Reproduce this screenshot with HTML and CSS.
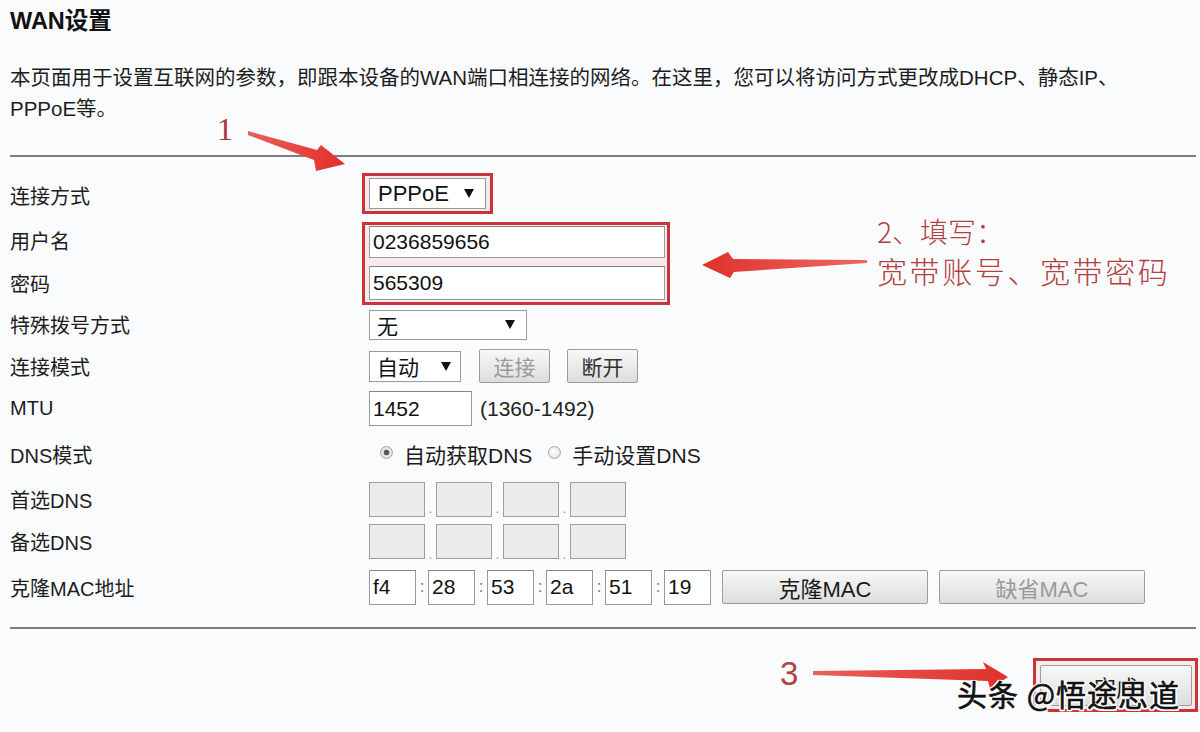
FILE: index.html
```html
<!DOCTYPE html>
<html lang="zh-CN">
<head>
<meta charset="utf-8">
<title>WAN设置</title>
<link rel="stylesheet" href="styles.css">
</head>
<body>
<div class="page">
  <h1 class="title">WAN设置</h1>
  <p class="intro">本页面用于设置互联网的参数，即跟本设备的WAN端口相连接的网络。在这里，您可以将访问方式更改成DHCP、静态IP、<br>PPPoE等。</p>
  <hr class="rule">

  <div class="form">
    <div class="label r1">连接方式</div>
    <div class="ctl r1">
      <div class="mark mark-type">
        <div class="select sel-type"><span>PPPoE</span><span class="caret"></span></div>
      </div>
    </div>

    <div class="label r2">用户名</div>
    <div class="label r3">密码</div>
    <div class="mark mark-cred">
      <input class="text" type="text" value="0236859656">
      <input class="text text-b" type="text" value="565309">
    </div>

    <div class="label r4">特殊拨号方式</div>
    <div class="ctl r4">
      <div class="select sel-none"><span>无</span><span class="caret"></span></div>
    </div>

    <div class="label r5">连接模式</div>
    <div class="ctl r5">
      <div class="select sel-auto"><span>自动</span><span class="caret"></span></div>
      <div class="btn btn-sm dim">连接</div>
      <div class="btn btn-sm btn-sm2">断开</div>
    </div>

    <div class="label r6">MTU</div>
    <div class="ctl r6">
      <input class="text mtu" type="text" value="1452">
      <span class="range">(1360-1492)</span>
    </div>

    <div class="label r7">DNS模式</div>
    <div class="ctl r7 radios">
      <span class="radio on"></span><span class="rlabel">自动获取DNS</span>
      <span class="radio"></span><span class="rlabel">手动设置DNS</span>
    </div>

    <div class="label r8">首选DNS</div>
    <div class="ctl r8">
      <span class="ipbox"></span><span class="dot">.</span><span class="ipbox"></span><span class="dot">.</span><span class="ipbox"></span><span class="dot">.</span><span class="ipbox"></span>
    </div>

    <div class="label r9">备选DNS</div>
    <div class="ctl r9">
      <span class="ipbox"></span><span class="dot">.</span><span class="ipbox"></span><span class="dot">.</span><span class="ipbox"></span><span class="dot">.</span><span class="ipbox"></span>
    </div>

    <div class="label r10">克隆MAC地址</div>
    <div class="ctl r10">
      <input class="text mac" type="text" value="f4"><span class="colon">:</span>
      <input class="text mac" type="text" value="28"><span class="colon">:</span>
      <input class="text mac" type="text" value="53"><span class="colon">:</span>
      <input class="text mac" type="text" value="2a"><span class="colon">:</span>
      <input class="text mac" type="text" value="51"><span class="colon">:</span>
      <input class="text mac" type="text" value="19">
      <div class="btn btn-wide">克隆MAC</div>
      <div class="btn btn-wide dim">缺省MAC</div>
    </div>
  </div>

  <hr class="rule rule-bottom">

  <div class="footer">
    <div class="mark mark-save">
      <div class="btn btn-save">完成</div>
    </div>
  </div>

  <svg class="arrows" width="1200" height="732" viewBox="0 0 1200 732">
    <defs>
      <linearGradient id="g1" x1="248" y1="133" x2="345" y2="163" gradientUnits="userSpaceOnUse">
        <stop offset="0" stop-color="#e8605a"/>
        <stop offset="1" stop-color="#e2302a"/>
      </linearGradient>
      <linearGradient id="g2" x1="867" y1="262" x2="702" y2="265" gradientUnits="userSpaceOnUse">
        <stop offset="0" stop-color="#ec6a62"/>
        <stop offset="1" stop-color="#e0302a"/>
      </linearGradient>
      <linearGradient id="g3" x1="813" y1="673" x2="1008" y2="677" gradientUnits="userSpaceOnUse">
        <stop offset="0" stop-color="#e8605a"/>
        <stop offset="1" stop-color="#e0302a"/>
      </linearGradient>
    </defs>
    <polygon fill="url(#g1)" points="248,131 317,150 321,145 345,164 316,171 314,160 248,135"/>
    <polygon fill="url(#g2)" points="702,265 728,252 733,259 867,260 867,263 734,272 730,278"/>
    <polygon fill="url(#g3)" points="813,671 986,669 983,662 1008,677 990,689 988,681 813,675"/>
  </svg>

  <span class="ann ann-1">1</span>
  <div class="ann ann-2">
    <div class="ann-2a">2、填写：</div>
    <div class="ann-2b">宽带账号、宽带密码</div>
  </div>
  <span class="ann ann-3">3</span>
  <span class="watermark">头条 @悟途思道</span>
</div>
</body>
</html>
```
FILE: styles.css
```css
html, body {
  margin: 0;
  padding: 0;
}

body {
  background: #fafbfd;
  font-family: "Liberation Sans", "Noto Sans CJK SC", sans-serif;
  color: #1d1d1d;
}

.page {
  position: relative;
  width: 1200px;
  height: 732px;
  padding: 0 4px 0 10px;
  box-sizing: border-box;
  overflow: hidden;
}

.title {
  margin: 3px 0 0;
  font-size: 23.5px;
  line-height: 36px;
  font-weight: bold;
  color: #111;
}

.intro {
  margin: 23px 0 0;
  font-size: 20.5px;
  line-height: 31px;
  white-space: nowrap;
}

.rule {
  margin: 31px 0 0;
  border: 0;
  border-top: 2px solid #7d7d7d;
  height: 0;
}

.rule-bottom {
  margin-top: 17px;
}

/* ---------- form grid ---------- */
.form {
  margin-top: 15px;
  display: grid;
  grid-template-columns: 359px 1fr;
  grid-template-rows: 47px 42px 45px 37px 46px 39px 52px 38px 46px 46px;
}

.label {
  grid-column: 1;
  align-self: center;
  font-size: 20px;
  white-space: nowrap;
}

.ctl {
  grid-column: 2;
  display: flex;
  align-items: center;
}

.r1 { grid-row: 1; }
.r2 { grid-row: 2; }
.r3 { grid-row: 3; }
.r4 { grid-row: 4; }
.r5 { grid-row: 5; }
.r6 { grid-row: 6; }
.r7 { grid-row: 7; }
.r8 { grid-row: 8; }
.r9 { grid-row: 9; }
.r10 { grid-row: 10; }

/* red highlight boxes */
.mark {
  border: 3px solid #c9343a;
  background: #f8eaeb;
  box-sizing: border-box;
}

.mark-type {
  align-self: flex-start;
  margin: 1px 0 0 -7px;
  width: 131px;
  height: 41px;
  padding: 2px 4px;
  display: flex;
  align-items: center;
}

.mark-cred {
  grid-column: 2;
  grid-row: 2 / 4;
  margin: 3px 0 1px -7px;
  width: 308px;
  display: flex;
  flex-direction: column;
  justify-content: space-between;
  padding: 1px 2px 2px 4px;
}

/* selects */
.select {
  display: flex;
  align-items: center;
  justify-content: space-between;
  background: #fff;
  border: 1px solid #9a9a9a;
  box-sizing: border-box;
  font-size: 21px;
  color: #111;
}

.caret {
  width: 0;
  height: 0;
  border-left: 5px solid transparent;
  border-right: 5px solid transparent;
  border-top: 9px solid #111;
}

.sel-type {
  width: 117px;
  height: 31px;
  padding: 0 11px 0 8px;
  font-size: 22px;
}

.sel-none {
  width: 158px;
  height: 30px;
  padding: 0 11px 0 7px;
}

.sel-auto {
  width: 92px;
  height: 31px;
  padding: 0 9px 0 7px;
}

/* text inputs */
.text {
  width: 296px;
  height: 32px;
  box-sizing: border-box;
  margin: 0;
  padding: 0 3px;
  border: 1px solid #9a9a9a;
  border-top-color: #858585;
  background: #fff;
  font-family: "Liberation Sans", "Noto Sans CJK SC", sans-serif;
  font-size: 21px;
  color: #111;
  outline: none;
}

.text-b {
  height: 34px;
}

.mtu {
  width: 103px;
  height: 35px;
}

.range {
  margin-left: 8px;
  font-size: 21px;
  color: #222;
}

.mac {
  width: 47px;
  height: 35px;
}

.colon {
  width: 12px;
  text-align: center;
  font-size: 17px;
  color: #777;
}

/* buttons */
.btn {
  display: flex;
  align-items: center;
  justify-content: center;
  box-sizing: border-box;
  height: 34px;
  border: 1px solid #9c9c9c;
  border-radius: 2px;
  background: linear-gradient(#f8f8f8, #dddddd);
  font-size: 21px;
  color: #333;
  white-space: nowrap;
}

.btn.dim {
  color: #9a9a9a;
}

.btn-sm {
  width: 71px;
  margin-left: 18px;
}

.btn-sm2 {
  margin-left: 17px;
}

.btn-wide {
  width: 206px;
  margin-left: 11px;
  font-size: 22px;
  color: #1a1a1a;
}

/* radios */
.radios {
  padding-left: 11px;
  font-size: 21px;
}

.radio {
  width: 13px;
  height: 13px;
  box-sizing: border-box;
  border-radius: 50%;
  border: 1px solid #a5a5a5;
  background: radial-gradient(circle at 40% 40%, #ffffff, #dcdcdc);
  margin-top: -4px;
}

.radio.on {
  background: radial-gradient(circle, #555 0, #555 2.5px, #e8e8e8 3.2px, #d8d8d8 100%);
}

.rlabel {
  margin-left: 11px;
  margin-right: 16px;
  color: #1a1a1a;
}

/* ip boxes */
.ipbox {
  width: 56px;
  height: 35px;
  box-sizing: border-box;
  border: 1px solid #9e9e9e;
  background: #ebebeb;
}

.dot {
  width: 11px;
  text-align: center;
  align-self: flex-end;
  font-size: 12px;
  line-height: 18px;
  color: #888;
}

/* footer */
.footer {
  display: flex;
  justify-content: flex-end;
  margin: 29px -2px 0 0;
}

.mark-save {
  width: 165px;
  height: 54px;
  padding: 4px 3px 3px 4px;
}

.btn-save {
  width: 152px;
  height: 41px;
  font-size: 22px;
  color: #222;
}

/* annotations (overlays) */
.arrows {
  position: absolute;
  left: 0;
  top: 0;
  pointer-events: none;
}

.ann {
  position: absolute;
  color: #ab3636;
}

.ann-1 {
  left: 217px;
  top: 111px;
  font-family: "Liberation Serif", serif;
  font-size: 32px;
  line-height: 36px;
}

.ann-3 {
  left: 780px;
  top: 656px;
  font-family: "Liberation Sans", sans-serif;
  font-size: 33px;
  line-height: 36px;
  color: #b04444;
}

.ann-2 {
  left: 877px;
  top: 214px;
  font-family: "Noto Sans CJK SC", sans-serif;
  font-weight: 300;
  white-space: nowrap;
  color: #b34040;
}

.ann-2a {
  font-size: 28px;
  line-height: 34px;
}

.ann-2b {
  margin-top: 4px;
  font-size: 30px;
  line-height: 36px;
  letter-spacing: 2.6px;
}

.watermark {
  position: absolute;
  left: 957px;
  top: 674px;
  font-family: "Noto Sans CJK SC", sans-serif;
  font-size: 30px;
  line-height: 38px;
  letter-spacing: 1px;
  color: #111;
  white-space: nowrap;
  -webkit-text-stroke: 0.6px #111;
  text-shadow:
    1.5px 0 0 #fff, -1.5px 0 0 #fff, 0 1.5px 0 #fff, 0 -1.5px 0 #fff,
    1.5px 1.5px 0 #fff, -1.5px -1.5px 0 #fff, 1.5px -1.5px 0 #fff, -1.5px 1.5px 0 #fff;
}
```
